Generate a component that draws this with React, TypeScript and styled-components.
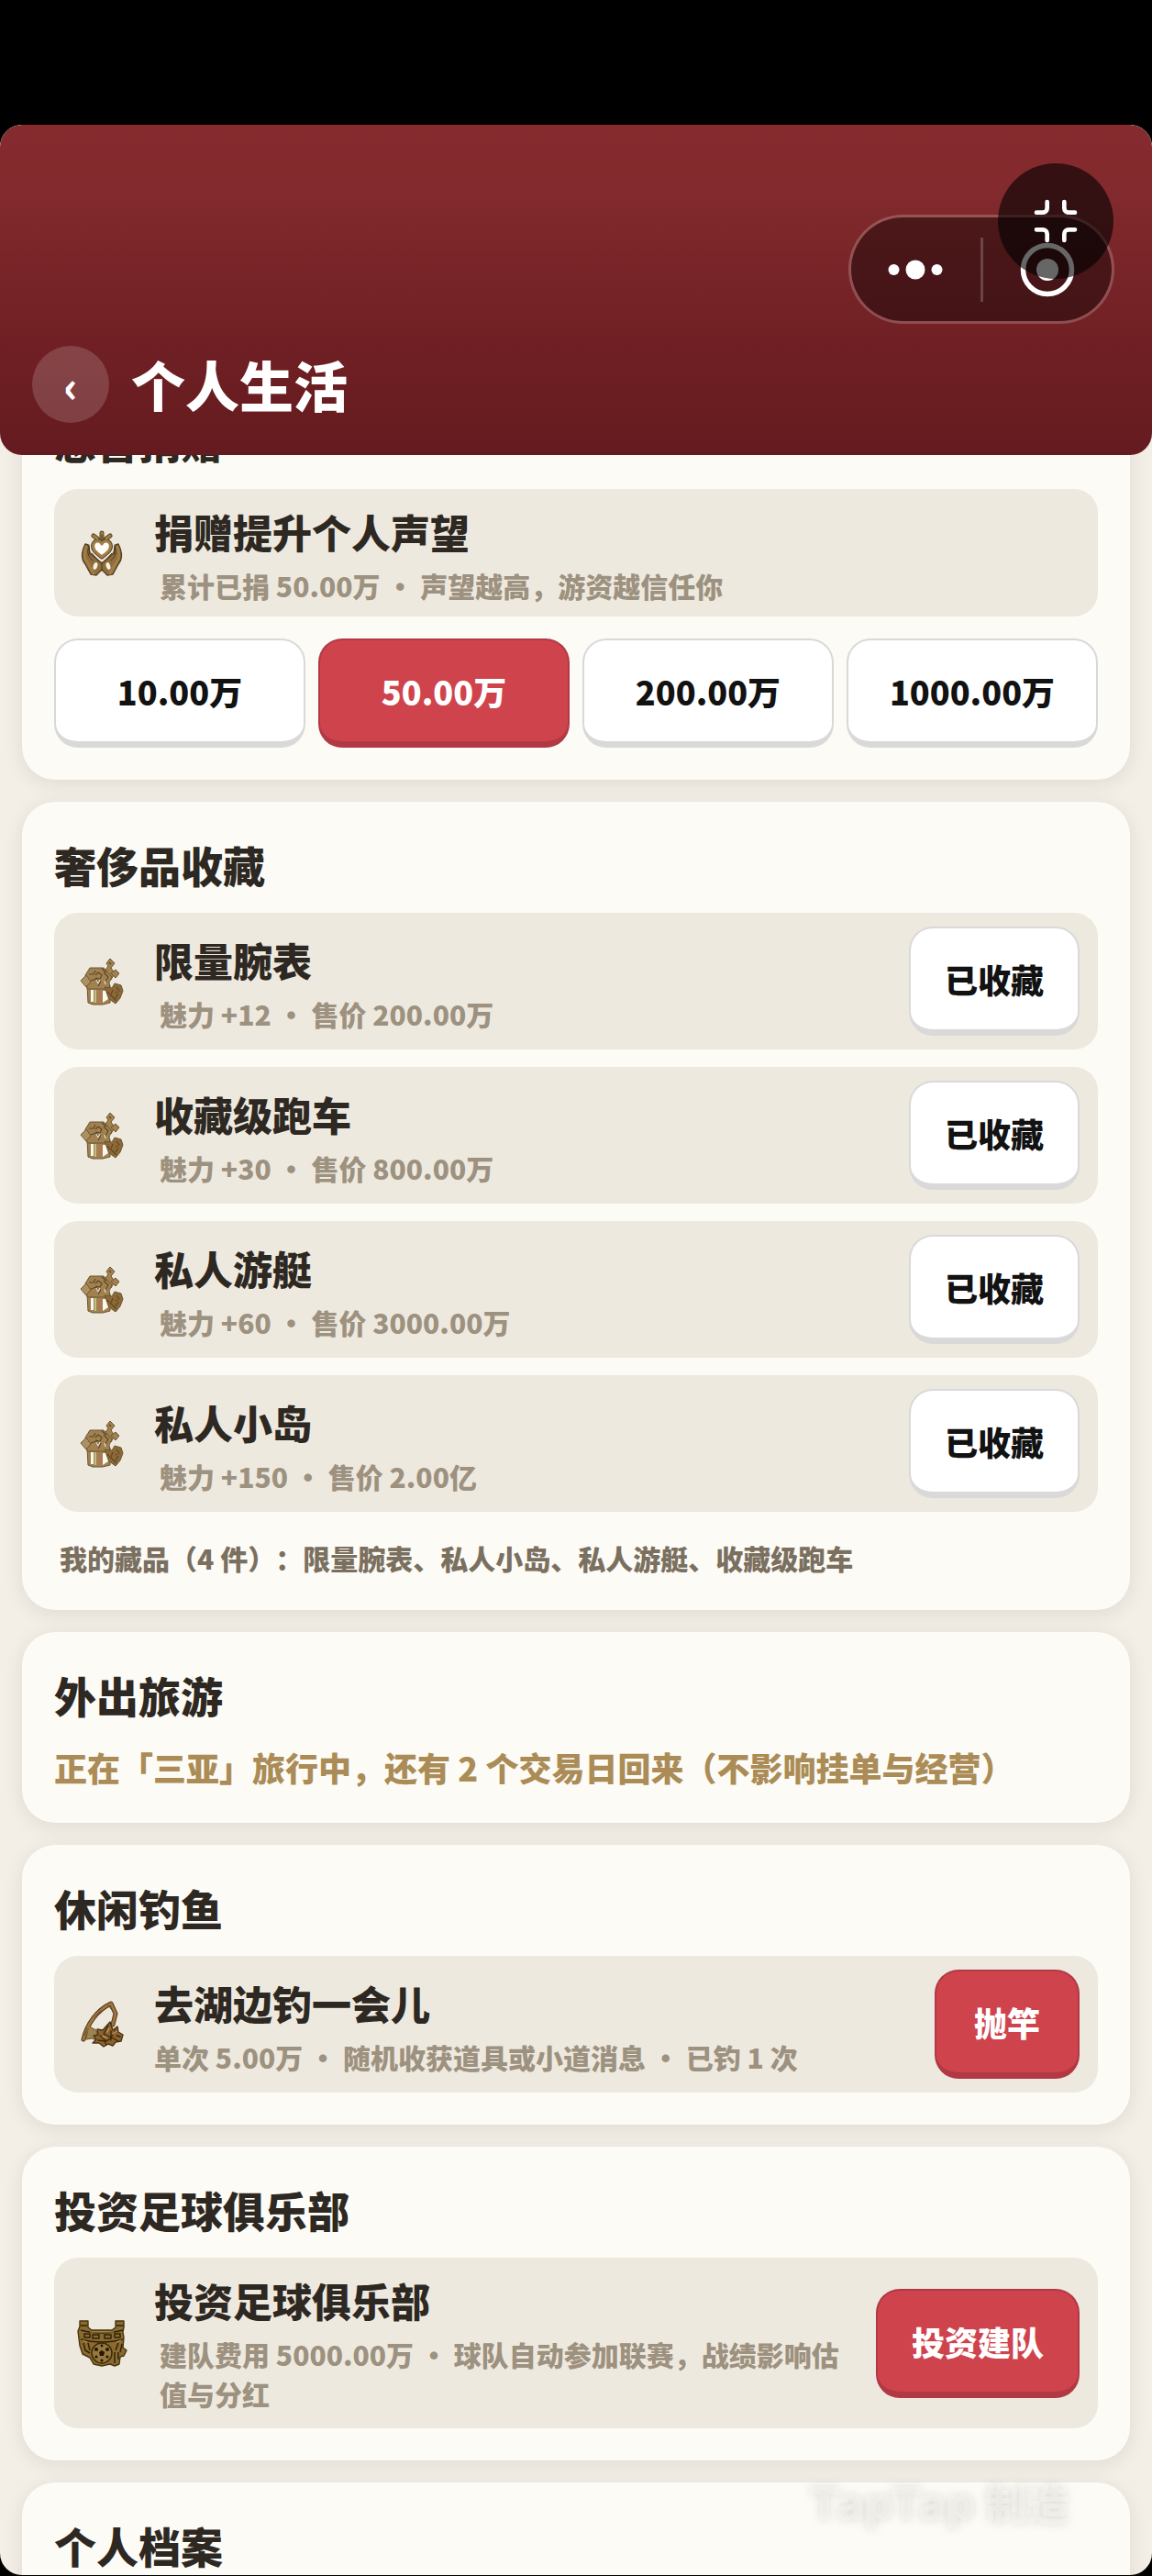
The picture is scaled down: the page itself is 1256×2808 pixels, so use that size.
import React, { useState } from "react";
import styled, { createGlobalStyle, css } from "styled-components";
import { Minimize } from "lucide-react";

const color = {
  page: "#f3eee6",
  card: "#fcfbf6",
  row: "#eee9df",
  ink: "#2e2822",
  muted: "#9d917f",
  note: "#7b7060",
  gold: "#ab8c57",
  red: "#cf434d",
  redEdge: "#b13944",
  edge: "#d9d9d9",
};

const GlobalStyle = createGlobalStyle`
  * { box-sizing: border-box; }
  body {
    margin: 0;
    background: #000;
    color: ${color.ink};
    font-family: "Noto Sans CJK SC", "Noto Sans", sans-serif;
    font-weight: 900;
    text-spacing-trim: space-all;
  }
  h1, h2, h3, p { margin: 0; font-weight: 900; }
  button { font-family: inherit; font-weight: 900; cursor: pointer; }
`;

const Device = styled.div`
  display: flex;
  flex-direction: column;
  height: 100vh;
  padding: 136px 0 1px;
`;

const Screen = styled.div`
  position: relative;
  display: flex;
  flex: 1;
  flex-direction: column;
  min-height: 0;
  overflow: hidden;
  border-radius: 24px;
  background: ${color.page};
`;

const Header = styled.header`
  position: relative;
  z-index: 1;
  display: flex;
  flex: none;
  align-items: flex-end;
  gap: 24px;
  min-height: 360px;
  padding: 35px;
  border-radius: 24px;
  background: linear-gradient(180deg, #862a2e 0%, #822a2d 20%, #722125 60%, #641b1f 100%);
  color: #fff;
`;

const BackButton = styled.button`
  width: 84px;
  height: 84px;
  padding: 0;
  border: 0;
  border-radius: 50%;
  background: rgba(255, 255, 255, 0.16);
  color: #fff;
  font-size: 46px;
  line-height: 84px;
`;

const PageTitle = styled.h1`
  font-size: 59px;
  line-height: 84px;
`;

const Capsule = styled.div`
  position: absolute;
  top: 98px;
  right: 41px;
  display: flex;
  align-items: center;
  width: 290px;
  height: 119px;
  border: 3px solid rgba(255, 255, 255, 0.2);
  border-radius: 60px;
  background: rgba(0, 0, 0, 0.4);
  background-clip: padding-box;
`;

const CapsuleButton = styled.button`
  display: flex;
  flex: 1;
  align-items: center;
  justify-content: center;
  height: 100%;
  padding: 0;
  border: 0;
  background: none;
`;

const CapsuleDivider = styled.span`
  width: 3px;
  height: 70px;
  background: rgba(255, 255, 255, 0.2);
`;

const ShrinkButton = styled.button`
  position: absolute;
  top: 42px;
  right: 42px;
  display: flex;
  align-items: center;
  justify-content: center;
  width: 126px;
  height: 126px;
  padding: 0;
  border: 0;
  border-radius: 50%;
  background: rgba(0, 0, 0, 0.6);
  color: #fff;
`;

/* Reaches up behind the rounded corners of the header. */
const Scroller = styled.main`
  flex: 1;
  min-height: 0;
  margin-top: -24px;
  overflow: hidden;
`;

/* The list is scrolled by 60px, so the first card is cut by the header. */
const Content = styled.div`
  display: flex;
  flex-direction: column;
  gap: 24px;
  margin-top: -60px;
  padding: 0 24px;
`;

const Card = styled.section`
  display: flex;
  flex-direction: column;
  gap: 19px;
  padding: 35px;
  border-radius: 36px;
  background: ${color.card};
  box-shadow: 0 4px 20px rgba(60, 55, 35, 0.1);
`;

const CardTitle = styled.h2`
  font-size: 46px;
  line-height: 67px;
`;

const Row = styled.div`
  display: flex;
  align-items: center;
  gap: 29px;
  padding: 12px 20px 12px 24px;
  border-radius: 26px;
  background: ${color.row};
`;

const RowText = styled.div`
  display: flex;
  flex: 1;
  flex-direction: column;
  gap: 7px;
  min-width: 0;
  padding-top: 3px;
`;

const RowTitle = styled.h3`
  font-size: 43px;
  line-height: 62px;
`;

const RowDetail = styled.p<{ $indent?: boolean; $wraps?: boolean }>`
  padding-left: ${(p) => (p.$indent ? 6 : 0)}px;
  padding-bottom: ${(p) => (p.$wraps ? 4 : 0)}px;
  color: ${color.muted};
  font-size: 30px;
  line-height: 43px;
`;

const RowIcon = styled.svg`
  flex: none;
  width: 56px;
  height: 56px;
`;

const Button = styled.button<{ $primary?: boolean; $inRow?: boolean }>`
  flex: none;
  height: 119px;
  padding: 0 37px;
  border: 2px solid ${color.edge};
  border-bottom-width: 7px;
  border-radius: 26px;
  background: #fff;
  color: #121212;
  font-size: 36px;
  line-height: 52px;
  ${(p) =>
    p.$primary &&
    css`
      border-color: ${color.redEdge};
      background: ${color.red};
      color: #fff;
    `}
  ${(p) =>
    p.$inRow &&
    css`
      min-width: 158px;
      margin: 3px 0;
    `}
`;

const AmountGrid = styled.div`
  display: grid;
  grid-template-columns: repeat(4, 1fr);
  gap: 14px;
  margin-top: 5px;

  ${Button} {
    padding: 0;
  }
`;

const CollectionNote = styled.p`
  padding: 10px 6px 0;
  color: ${color.note};
  font-size: 30px;
  line-height: 43px;
`;

const TravelNote = styled.p`
  color: ${color.gold};
  font-size: 36px;
  line-height: 52px;
`;

const Watermark = styled.span`
  position: absolute;
  right: 90px;
  bottom: 44px;
  color: rgba(252, 251, 246, 0.4);
  font-size: 46px;
  line-height: 67px;
  text-shadow: 0 0 10px rgba(110, 105, 100, 0.2);
  pointer-events: none;
`;

const WatermarkBrand = styled.span`
  font-family: Inter, sans-serif;
  font-size: 50px;
`;

const DonateIcon = () => (
  <RowIcon viewBox="0 0 56 56" fill="none" strokeLinecap="round" strokeLinejoin="round" aria-hidden="true">
    <g stroke="#5b4626" strokeWidth="5">
      <path d="M28 6v6M19 9l4 3M37 9l-4 3" />
      <path d="M28 32C22 27 17 24 19 18c2-4 7-4 9 0 2-4 7-4 9 0 2 6-3 9-9 14z" fill="#fdfcf8" />
    </g>
    <path
      d="M10 18C6 26 5 34 10 40l6 11 6 1 6-6 6 6 6-1 6-11c5-6 4-14 0-22l-3 1-2 9-13 11-13-11-2-9z"
      fill="#8f6d3c"
      stroke="#54401f"
      strokeWidth="1.4"
    />
    <g stroke="#a17e48" strokeWidth="3">
      <path d="M28 6v6M19 9l4 3M37 9l-4 3" />
      <path d="M28 32C22 27 17 24 19 18c2-4 7-4 9 0 2-4 7-4 9 0 2 6-3 9-9 14z" fill="#fdfcf8" />
      <path d="M11 21c-3 8-2 14 2 18l6 11M45 21c3 8 2 14-2 18l-6 11" />
    </g>
    <g stroke="#4a371b" strokeWidth="1">
      <path d="M13 23c-1 6 1 9 5 13M17 28l8 9M43 23c1 6-1 9-5 13M39 28l-8 9M14 19l1 10M42 19l-1 10M28 38v9M28 8v5" />
    </g>
    <ellipse cx="21" cy="42" rx="2.2" ry="4" fill="#f8f3e6" transform="rotate(18 21 42)" />
    <ellipse cx="35" cy="42" rx="2.2" ry="4" fill="#f8f3e6" transform="rotate(-18 35 42)" />
  </RowIcon>
);

const LuxuryIcon = () => (
  <RowIcon viewBox="0 0 56 56" fill="none" strokeLinejoin="round" aria-hidden="true">
    <g stroke="#6a5634" strokeWidth="1">
      <path d="M12 32h25v19l-8 2H18l-5-2z" fill="#a1814f" />
      <path d="M37 3l5 5-4 5 4 6-4 7-8-8 5-7-2-3z" fill="#a1814f" />
      <path d="M43 15l4 4-4 5-5-5z" fill="#a1814f" />
      <path d="M15 13h15l9 10-3 6 1 7H12l-1-9-1-6z" fill="#a1814f" />
      <path d="M11 21l5 7-5 6-6-7z" fill="#ac905d" />
      <path d="M31 34l8 1 3-5 7 2 2 6-3 8-5 6-7-5z" fill="#8b6a37" />
    </g>
    <path d="M16 37h3v13h-3zM29 38h3l3 9-6 4z" fill="#fbf8ee" />
    <path d="M20 37h2v14h-2z" fill="#c0be86" />
    <path d="M25 38h2v12h-2z" fill="#b87058" />
    <g stroke="#5a4524" strokeWidth="1.1">
      <path d="M14 20h5l2-4M21 21l3-3 4 3-2 4-5-1M16 27l6-2 4 6M30 18l5 5-3 5M27 27l-3 6M34 39l10 10M40 37l-2 5M44 34l3 4-4 2M46 41l-3 5" />
      <path d="M36 7l2 2M28 14l5 4" />
    </g>
    <path d="M22 26l2 4 2-4M31 27l1 4" stroke="#dedac9" strokeWidth="1.2" />
    <path d="M35 38l3 4M45 37l1 3" stroke="#bd5842" strokeWidth="1" />
  </RowIcon>
);

const FishingIcon = () => (
  <RowIcon viewBox="0 0 56 56" fill="none" strokeLinecap="round" strokeLinejoin="round" aria-hidden="true">
    <path d="M8 44C12 27 23 12 38 5l5 11-3 12" stroke="#503919" strokeWidth="5" />
    <path d="M14 30l8 4 3 12-8-3-6 1z" fill="#9b8353" stroke="#69502d" />
    <path d="M8 44C12 27 23 12 38 5l5 11-3 12" stroke="#a0753f" strokeWidth="3" />
    <path
      d="M37 25l3 9 5-4 1 6 5 3-2 7-6 1-3 4-5-2-5 3-5-4-7 0 4-4-3-4 5-1-1-6 6 1z"
      fill="#8b632d"
      stroke="#4b3415"
      strokeWidth="1.4"
    />
    <path d="M35 29l-5 9 8 4 5-8M26 40l7 6 6-4 7 4M24 45l8 1M38 35v10M44 40l4 1M31 46l2 4" stroke="#39260e" strokeWidth="1.3" />
    <path d="M29 41l4 1M40 38l4-3M36 32l-2 4" stroke="#c09557" strokeWidth="1.4" />
    <path d="M9 40l3-8M20 20l7-7M35 7l4 5" stroke="#6d4b22" />
  </RowIcon>
);

const FootballIcon = () => (
  <RowIcon viewBox="0 0 56 56" fill="none" strokeLinejoin="round" aria-hidden="true">
    <path
      d="M4 4h9v7l4 3h22l4-3V4h9v7l-1 5 1 6-1 11 4 3-3 6-4 1-1 8-5 2-5-2-9 2-9-2-4-7-8-4-3-9-2-16 2-5z"
      fill="#8a6a31"
      stroke="#47350f"
      strokeWidth="1.4"
    />
    <g stroke="#30230a" strokeWidth="1.5">
      <path d="M5 14c14 4 32 4 46 0M5 24c14 4 32 4 46 0M5 9h7M44 9h8" />
      <path d="M9 18h6v4H9zM18 19h7v4h-7zM31 19h7v4h-7zM42 18h6v4h-6z" />
      <path d="M8 28l2 8 5 3M13 28l2 8M46 28l-3 8M50 29l-2 9M42 38v12M46 38v8" />
    </g>
    <circle cx="28" cy="39" r="11" fill="#98783b" stroke="#3c2b0c" strokeWidth="1.5" />
    <g fill="#201707">
      <path d="M28 36l3 2-1 4h-4l-1-4z" />
      <circle cx="22" cy="35" r="2" />
      <circle cx="34" cy="35" r="2" />
      <circle cx="22" cy="43" r="1.6" />
      <circle cx="34" cy="43" r="1.6" />
      <circle cx="28" cy="47" r="1.6" />
      <circle cx="28" cy="31" r="1.4" />
    </g>
    <path d="M15 16h26M7 25l5 2M44 27l5-2" stroke="#b7974f" />
  </RowIcon>
);

const donations = ["10.00万", "50.00万", "200.00万", "1000.00万"];

const luxuries = [
  { name: "限量腕表", detail: "魅力 +12 ・ 售价 200.00万" },
  { name: "收藏级跑车", detail: "魅力 +30 ・ 售价 800.00万" },
  { name: "私人游艇", detail: "魅力 +60 ・ 售价 3000.00万" },
  { name: "私人小岛", detail: "魅力 +150 ・ 售价 2.00亿" },
];

export default function App() {
  const [amount, setAmount] = useState("50.00万");

  return (
    <>
      <GlobalStyle />
      <Device>
        <Screen>
          <Header>
            <BackButton aria-label="返回">‹</BackButton>
            <PageTitle>个人生活</PageTitle>
            <Capsule>
              <CapsuleButton aria-label="更多">
                <svg width="60" height="22" viewBox="0 0 60 22" fill="#fff" aria-hidden="true">
                  <circle cx="6.5" cy="11" r="6" />
                  <circle cx="30" cy="11" r="10.5" />
                  <circle cx="53.5" cy="11" r="6" />
                </svg>
              </CapsuleButton>
              <CapsuleDivider />
              <CapsuleButton aria-label="关闭">
                <svg width="60" height="60" viewBox="0 0 60 60" aria-hidden="true">
                  <circle cx="30" cy="30" r="26.5" fill="none" stroke="#fff" strokeWidth="5.5" />
                  <circle cx="30" cy="30" r="12" fill="#fff" />
                </svg>
              </CapsuleButton>
            </Capsule>
            <ShrinkButton aria-label="退出全屏">
              <Minimize size={56} strokeWidth={2} />
            </ShrinkButton>
          </Header>

          <Scroller>
            <Content>
              <Card>
                <CardTitle>慈善捐赠</CardTitle>
                <Row>
                  <DonateIcon />
                  <RowText>
                    <RowTitle>捐赠提升个人声望</RowTitle>
                    <RowDetail $indent>累计已捐 50.00万 ・ 声望越高，游资越信任你</RowDetail>
                  </RowText>
                </Row>
                <AmountGrid>
                  {donations.map((value) => (
                    <Button key={value} $primary={value === amount} onClick={() => setAmount(value)}>
                      {value}
                    </Button>
                  ))}
                </AmountGrid>
              </Card>

              <Card>
                <CardTitle>奢侈品收藏</CardTitle>
                {luxuries.map((item) => (
                  <Row key={item.name}>
                    <LuxuryIcon />
                    <RowText>
                      <RowTitle>{item.name}</RowTitle>
                      <RowDetail $indent>{item.detail}</RowDetail>
                    </RowText>
                    <Button $inRow>已收藏</Button>
                  </Row>
                ))}
                <CollectionNote>我的藏品（4 件）：限量腕表、私人小岛、私人游艇、收藏级跑车</CollectionNote>
              </Card>

              <Card>
                <CardTitle>外出旅游</CardTitle>
                <TravelNote>正在「三亚」旅行中，还有 2 个交易日回来（不影响挂单与经营）</TravelNote>
              </Card>

              <Card>
                <CardTitle>休闲钓鱼</CardTitle>
                <Row>
                  <FishingIcon />
                  <RowText>
                    <RowTitle>去湖边钓一会儿</RowTitle>
                    <RowDetail>单次 5.00万 ・ 随机收获道具或小道消息 ・ 已钓 1 次</RowDetail>
                  </RowText>
                  <Button $primary $inRow>
                    抛竿
                  </Button>
                </Row>
              </Card>

              <Card>
                <CardTitle>投资足球俱乐部</CardTitle>
                <Row>
                  <FootballIcon />
                  <RowText>
                    <RowTitle>投资足球俱乐部</RowTitle>
                    <RowDetail $indent $wraps>
                      建队费用 5000.00万 ・ 球队自动参加联赛，战绩影响估值与分红
                    </RowDetail>
                  </RowText>
                  <Button $primary $inRow>
                    投资建队
                  </Button>
                </Row>
              </Card>

              <Card>
                <CardTitle>个人档案</CardTitle>
              </Card>
            </Content>
          </Scroller>
          <Watermark>
            <WatermarkBrand>TapTap</WatermarkBrand> 制造
          </Watermark>
        </Screen>
      </Device>
    </>
  );
}
